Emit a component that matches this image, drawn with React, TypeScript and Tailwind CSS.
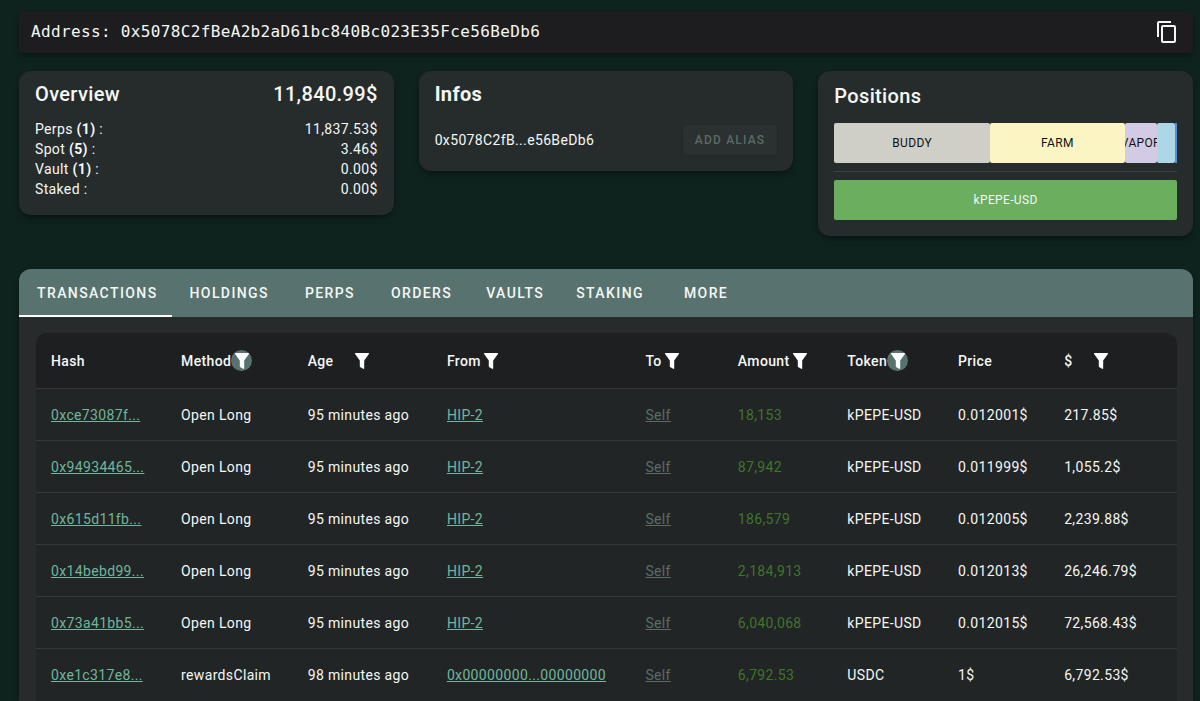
import type { ReactNode } from 'react';

const balances = [
  { label: 'Perps', count: 1, value: '11,837.53$' },
  { label: 'Spot', count: 5, value: '3.46$' },
  { label: 'Vault', count: 1, value: '0.00$' },
  { label: 'Staked', value: '0.00$' },
];

const tabs = [
  { name: 'Transactions', style: 'pl-[18px] pr-[14px] border-white' },
  { name: 'Holdings', style: 'pl-[18px] pr-4 border-transparent' },
  { name: 'Perps', style: 'px-5 border-transparent' },
  { name: 'Orders', style: 'px-4 border-transparent' },
  { name: 'Vaults', style: 'pl-[18px] pr-4 border-transparent' },
  { name: 'Staking', style: 'px-4 border-transparent' },
  { name: 'More', style: 'px-6 border-transparent' },
];

type Column = { name: string; width: string; filter?: 'plain' | 'active'; gap?: string };

const columns: Column[] = [
  { name: 'Hash', width: 'w-[11.4%]' },
  { name: 'Method', width: 'w-[11.1%]', filter: 'active' },
  { name: 'Age', width: 'w-[12.2%]', filter: 'plain', gap: 'ml-[18px]' },
  { name: 'From', width: 'w-[17.4%]', filter: 'plain' },
  { name: 'To', width: 'w-[8.1%]', filter: 'plain' },
  { name: 'Amount', width: 'w-[9.6%]', filter: 'plain' },
  { name: 'Token', width: 'w-[9.7%]', filter: 'active' },
  { name: 'Price', width: 'w-[9.3%]' },
  { name: '$', width: 'w-[11.2%]', filter: 'plain', gap: 'ml-[18px]' },
];

const rows = [
  ['0xce73087f...', 'Open Long', '95 minutes ago', 'HIP-2', '18,153', 'kPEPE-USD', '0.012001$', '217.85$'],
  ['0x94934465...', 'Open Long', '95 minutes ago', 'HIP-2', '87,942', 'kPEPE-USD', '0.011999$', '1,055.2$'],
  ['0x615d11fb...', 'Open Long', '95 minutes ago', 'HIP-2', '186,579', 'kPEPE-USD', '0.012005$', '2,239.88$'],
  ['0x14bebd99...', 'Open Long', '95 minutes ago', 'HIP-2', '2,184,913', 'kPEPE-USD', '0.012013$', '26,246.79$'],
  ['0x73a41bb5...', 'Open Long', '95 minutes ago', 'HIP-2', '6,040,068', 'kPEPE-USD', '0.012015$', '72,568.43$'],
  ['0xe1c317e8...', 'rewardsClaim', '98 minutes ago', '0x00000000...00000000', '6,792.53', 'USDC', '1$', '6,792.53$'],
];

function Card({ children }: { children: ReactNode }) {
  return <section className="rounded-xl bg-[#262c2b] px-4 shadow-md shadow-black/30">{children}</section>;
}

function FilterIcon() {
  return (
    <svg viewBox="0 0 14 16" className="h-4 w-3.5" fill="currentColor" aria-hidden="true">
      <path d="M.6 0h12.8c.6 0 .8.6.5 1L9.200 7.400V15.200c0 .6-.6.9-1.100.6L5.500 14.300A1.200 1.200 0 0 1 4.800 13.400V7.400L.1 1C-.2.6 0 0 .6 0Z" />
    </svg>
  );
}

function TableLink({ children, muted }: { children: ReactNode; muted?: boolean }) {
  return (
    <a href="#" className={muted ? 'text-[#5d6b67] underline' : 'text-[#70b59d] underline'}>
      {children}
    </a>
  );
}

export default function App() {
  return (
    <main className="min-h-screen bg-[#0f231e] pt-[11px] pr-[7px] pl-[19px] font-['Roboto',sans-serif] text-sm tracking-wide text-[#f4f7f6]">
      <header className="flex h-[42px] items-center justify-between rounded-sm bg-[#1d1d1f] pr-[14px] pl-3 shadow-md shadow-black/30">
        <p className="font-['DejaVu_Sans_Mono',monospace] text-base">
          Address: 0x5078C2fBeA2b2aD61bc840Bc023E35Fce56BeDb6
        </p>
        <button type="button" aria-label="Copy address">
          <svg viewBox="0 0 24 24" className="size-6" fill="currentColor" aria-hidden="true">
            <path d="M19 21H8V7h11m0-2H8a2 2 0 0 0-2 2v14a2 2 0 0 0 2 2h11a2 2 0 0 0 2-2V7a2 2 0 0 0-2-2m-3-4H4a2 2 0 0 0-2 2v14h2V3h12V1Z" />
          </svg>
        </button>
      </header>

      <div className="mt-[18px] grid grid-cols-3 items-start gap-[25px]">
        <Card>
          <div className="mb-0.5 flex h-[46px] items-center justify-between text-xl font-medium">
            <h2>Overview</h2>
            <span>11,840.99$</span>
          </div>
          <dl className="pb-4 leading-5">
            {balances.map((b) => (
              <div key={b.label} className="flex justify-between">
                <dt>
                  {b.label} {b.count !== undefined && <b>({b.count})</b>} :
                </dt>
                <dd>{b.value}</dd>
              </div>
            ))}
          </dl>
        </Card>

        <Card>
          <h2 className="mb-0.5 flex h-[46px] items-center text-xl font-bold">Infos</h2>
          <div className="flex items-center justify-between pt-1.5 pb-4">
            <span>0x5078C2fB...e56BeDb6</span>
            <button
              type="button"
              disabled
              className="h-[30px] rounded bg-[#2a3130] px-3 text-xs font-medium tracking-widest text-[#5b6a66] uppercase shadow-sm"
            >
              Add alias
            </button>
          </div>
        </Card>

        <Card>
          <h2 className="mb-0.5 flex h-[50px] items-center text-xl font-medium">Positions</h2>
          <div className="flex h-10 text-xs text-[#111111]">
            <div className="flex w-[45.4%] items-center justify-center rounded-xs bg-[#cfcfc8]">BUDDY</div>
            <div className="flex w-[39.4%] items-center justify-center rounded-xs bg-[#fbf5c4]">FARM</div>
            <div className="flex w-[9.3%] items-center justify-center overflow-hidden rounded-xs bg-[#d3cbe5]">VAPOR</div>
            <div className="grow rounded-xs bg-[#add6e6]" />
            <div className="w-0.5 shrink-0 bg-[#5a8fd8]" />
          </div>
          <hr className="my-2 border-t border-[#3a4241] pb-px -mb-px" />
          <div className="mt-2 mb-4 flex h-10 items-center justify-center rounded-xs bg-[#6aae5e] text-xs">
            kPEPE-USD
          </div>
        </Card>
      </div>

      <section className="mt-[33px] rounded-t-xl bg-[#272b2c] shadow-md shadow-black/30">
        <nav className="flex h-12 rounded-t-xl bg-[#58736f]">
          {tabs.map((t) => (
            <button
              key={t.name}
              type="button"
              className={`border-b-2 pt-0.5 font-medium tracking-widest uppercase ${t.style}`}
            >
              {t.name}
            </button>
          ))}
        </nav>
        <div className="pt-4 pr-4 pl-[17px]">
          <table className="w-full table-fixed border-separate border-spacing-0 overflow-hidden rounded-t-xl bg-[#222526] text-left whitespace-nowrap">
            <thead className="bg-[#1e1f21]">
              <tr>
                {columns.map((c) => (
                  <th key={c.name} className={`h-14 border-b border-[#35393a] p-0 pl-[15px] font-medium ${c.width}`}>
                    <div className="flex items-center">
                      {c.name}
                      {c.filter && (
                        <button
                          type="button"
                          aria-label={`Filter ${c.name}`}
                          className={`grid size-[21px] place-items-center rounded-full text-white ${c.filter === 'active' ? 'bg-[#58736f]' : ''} ${c.gap ?? ''}`}
                        >
                          <FilterIcon />
                        </button>
                      )}
                    </div>
                  </th>
                ))}
              </tr>
            </thead>
            <tbody>
              {rows.map(([hash, method, age, from, amount, token, price, total]) => (
                <tr key={hash} className="*:h-[52px] *:border-b *:border-[#35393a] *:p-0 *:pl-[15px] last:*:border-b-0">
                  <td><TableLink>{hash}</TableLink></td>
                  <td>{method}</td>
                  <td>{age}</td>
                  <td><TableLink>{from}</TableLink></td>
                  <td><TableLink muted>Self</TableLink></td>
                  <td className="text-[#3f7429]">{amount}</td>
                  <td>{token}</td>
                  <td>{price}</td>
                  <td>{total}</td>
                </tr>
              ))}
            </tbody>
          </table>
        </div>
      </section>
    </main>
  );
}
